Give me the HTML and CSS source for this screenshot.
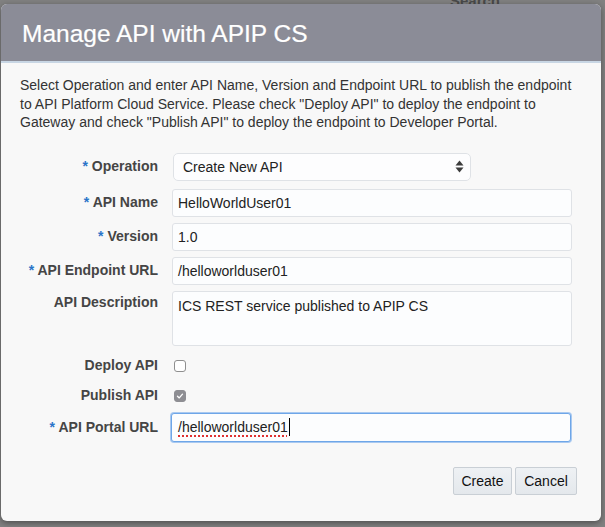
FILE: index.html
```html
<!DOCTYPE html>
<html>
<head>
<meta charset="utf-8">
<link rel="stylesheet" href="styles.css">
</head>
<body>
<div class="backdrop-search">Search</div>
<div class="dialog">
  <div class="dialog-header">
    <h1 class="dialog-title">Manage API with APIP CS</h1>
  </div>
  <div class="dialog-body">
    <p class="intro">Select Operation and enter API Name, Version and Endpoint URL to publish the endpoint to API Platform Cloud Service. Please check "Deploy API" to deploy the endpoint to Gateway and check "Publish API" to deploy the endpoint to Developer Portal.</p>
    <div class="form">
      <div class="row row-select">
        <label class="label"><span class="req">*</span> Operation</label>
        <div class="select">
          <span class="select-text">Create New API</span>
          <svg class="select-arrows" width="9" height="13" viewBox="0 0 9 13"><path d="M4.5 0.5 L8.5 5.5 H0.5 Z" fill="#3b3b3b"/><path d="M4.5 12.5 L8.5 7.5 H0.5 Z" fill="#3b3b3b"/></svg>
        </div>
      </div>
      <div class="row">
        <label class="label"><span class="req">*</span> API Name</label>
        <div class="input">HelloWorldUser01</div>
      </div>
      <div class="row">
        <label class="label"><span class="req">*</span> Version</label>
        <div class="input">1.0</div>
      </div>
      <div class="row">
        <label class="label"><span class="req">*</span> API Endpoint URL</label>
        <div class="input">/helloworlduser01</div>
      </div>
      <div class="row row-area">
        <label class="label label-top">API Description</label>
        <div class="input textarea">ICS REST service published to APIP CS</div>
      </div>
      <div class="row row-check">
        <label class="label">Deploy API</label>
        <span class="checkbox"></span>
      </div>
      <div class="row row-check row-check2">
        <label class="label">Publish API</label>
        <span class="checkbox checked"><svg width="12" height="12" viewBox="0 0 12 12"><path d="M3 6.3 L5.1 8.3 L9 3.8" fill="none" stroke="#fff" stroke-width="1.6" stroke-linecap="round" stroke-linejoin="round"/></svg></span>
      </div>
      <div class="row row-portal">
        <label class="label"><span class="req">*</span> API Portal URL</label>
        <div class="input focused"><span class="spell">/helloworlduser01</span><span class="caret"></span></div>
      </div>
    </div>
    <div class="actions">
      <button class="btn btn-create">Create</button>
      <button class="btn btn-cancel">Cancel</button>
    </div>
  </div>
</div>
</body>
</html>
```
FILE: styles.css
```css
html, body {
  margin: 0;
  padding: 0;
}
body {
  width: 605px;
  height: 527px;
  overflow: hidden;
  background: #818181;
  font-family: "Liberation Sans", Arial, Helvetica, sans-serif;
  position: relative;
}
.backdrop-search {
  position: absolute;
  left: 450px;
  top: -8px;
  font-size: 15px;
  font-weight: bold;
  color: #4a4a4a;
}
.dialog {
  position: relative;
  margin: 4px 0 0 1px;
  width: 600px;
  height: 517px;
  border-radius: 6px;
  overflow: hidden;
  background: #f8f8f8;
  box-shadow: 0 2px 6px rgba(0, 0, 0, 0.4);
  display: flex;
  flex-direction: column;
}
.dialog-header {
  height: 57px;
  background: #8b8c97;
  border-bottom: 2px solid #c8d6e4;
  display: flex;
  align-items: center;
  padding-left: 21px;
}
.dialog-title {
  margin: 0;
  font-size: 24.5px;
  font-weight: normal;
  color: #ffffff;
  padding-top: 3px;
  -webkit-text-stroke: 0.2px #ffffff;
}
.dialog-body {
  padding: 13px 29px 0 19px;
  display: flex;
  flex-direction: column;
}
.intro {
  margin: 0;
  font-size: 14px;
  line-height: 18.5px;
  color: #333333;
}
.form {
  margin-top: 21px;
  display: flex;
  flex-direction: column;
}
.row {
  display: grid;
  grid-template-columns: 138px 1fr;
  column-gap: 14px;
  align-items: center;
  margin-top: 6px;
}
.row-select {
  margin-top: 0;
  margin-bottom: 2px;
}
.label {
  text-align: right;
  font-size: 14px;
  font-weight: bold;
  color: #454545;
  line-height: 19px;
}
.req {
  color: #2a74c9;
}
.label-top {
  align-self: start;
  padding-top: 2px;
}
.select {
  width: 298px;
  height: 28px;
  box-sizing: border-box;
  border: 1px solid #dfe2e6;
  border-radius: 5px;
  background: #fdfdfe;
  display: flex;
  align-items: center;
  justify-content: space-between;
  padding: 0 6px 0 9px;
  font-size: 14px;
  color: #222;
  margin-left: 1px;
}
.select-arrows {
  display: block;
}
.input {
  height: 28px;
  box-sizing: border-box;
  border: 1px solid #dfe2e6;
  border-radius: 3px;
  background: #fcfdfe;
  display: flex;
  align-items: center;
  padding-left: 5px;
  font-size: 14px;
  color: #222;
}
.textarea {
  height: 55px;
  align-items: flex-start;
  padding-top: 5px;
  line-height: 19px;
}
.row-check {
  height: 28px;
}
.row-check2 {
  margin-top: 2px;
}
.checkbox {
  width: 12px;
  height: 12px;
  box-sizing: border-box;
  border: 1px solid #8f8f8f;
  border-radius: 3px;
  background: #ffffff;
  margin-left: 2px;
  display: flex;
  align-items: center;
  justify-content: center;
}
.checkbox.checked {
  background: #8e8e93;
  border-color: #8e8e93;
}
.checkbox svg {
  display: block;
}
.row-portal {
  margin-top: 3px;
}
.focused {
  height: 29px;
  border: 1px solid #6ea6e8;
  box-shadow: 0 0 0 1px #a9c9f0;
  margin-left: -1px;
  margin-right: 1px;
  padding-left: 6px;
}
.spell {
  text-decoration: underline dotted #e03030;
  text-decoration-thickness: 2px;
  text-underline-offset: 3px;
}
.caret {
  display: inline-block;
  width: 1px;
  height: 18px;
  background: #000;
  margin-left: 1px;
}
.actions {
  margin-top: 25px;
  display: flex;
  justify-content: flex-end;
  gap: 3px;
  margin-right: -5px;
}
.btn {
  height: 28px;
  box-sizing: border-box;
  border: 1px solid #c9cfd5;
  border-radius: 2px;
  background: linear-gradient(#eef1f4, #e4e8ec);
  font-family: "Liberation Sans", Arial, Helvetica, sans-serif;
  font-size: 14px;
  color: #111;
  padding: 0 6px;
}
.btn-create {
  width: 59px;
}
.btn-cancel {
  width: 62px;
}
```
